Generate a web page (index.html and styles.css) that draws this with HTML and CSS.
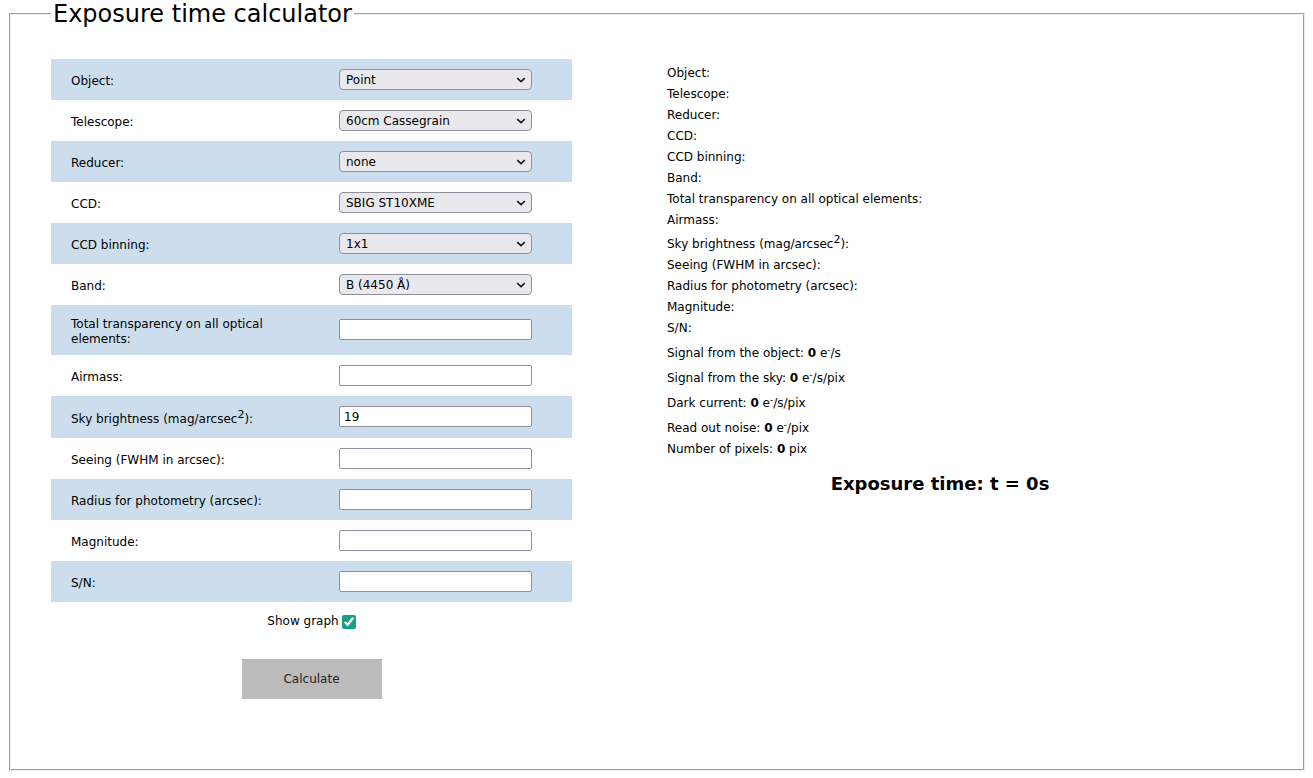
FILE: index.html
```html
<!DOCTYPE html>
<html lang="en">
<head>
<meta charset="utf-8">
<title>Exposure time calculator</title>
<link rel="stylesheet" href="styles.css">
</head>
<body>
<fieldset class="calc">
  <legend class="calc-title">Exposure time calculator</legend>
  <div class="layout">
    <div class="form-col">
      <table class="form-table">
        <tr class="row alt"><td class="lbl"><label>Object:</label></td><td class="ctl"><span class="sel-wrap"><select class="sel"><option>Point</option></select><svg class="chev" width="10" height="6" viewBox="0 0 10 6"><path d="M1.2 1.2 L5 4.6 L8.8 1.2" fill="none" stroke="#1a1a1a" stroke-width="1.6"/></svg></span></td></tr>
        <tr class="row"><td class="lbl"><label>Telescope:</label></td><td class="ctl"><span class="sel-wrap"><select class="sel"><option>60cm Cassegrain</option></select><svg class="chev" width="10" height="6" viewBox="0 0 10 6"><path d="M1.2 1.2 L5 4.6 L8.8 1.2" fill="none" stroke="#1a1a1a" stroke-width="1.6"/></svg></span></td></tr>
        <tr class="row alt"><td class="lbl"><label>Reducer:</label></td><td class="ctl"><span class="sel-wrap"><select class="sel"><option>none</option></select><svg class="chev" width="10" height="6" viewBox="0 0 10 6"><path d="M1.2 1.2 L5 4.6 L8.8 1.2" fill="none" stroke="#1a1a1a" stroke-width="1.6"/></svg></span></td></tr>
        <tr class="row"><td class="lbl"><label>CCD:</label></td><td class="ctl"><span class="sel-wrap"><select class="sel"><option>SBIG ST10XME</option></select><svg class="chev" width="10" height="6" viewBox="0 0 10 6"><path d="M1.2 1.2 L5 4.6 L8.8 1.2" fill="none" stroke="#1a1a1a" stroke-width="1.6"/></svg></span></td></tr>
        <tr class="row alt"><td class="lbl"><label>CCD binning:</label></td><td class="ctl"><span class="sel-wrap"><select class="sel"><option>1x1</option></select><svg class="chev" width="10" height="6" viewBox="0 0 10 6"><path d="M1.2 1.2 L5 4.6 L8.8 1.2" fill="none" stroke="#1a1a1a" stroke-width="1.6"/></svg></span></td></tr>
        <tr class="row"><td class="lbl"><label>Band:</label></td><td class="ctl"><span class="sel-wrap"><select class="sel"><option>B (4450 Å)</option></select><svg class="chev" width="10" height="6" viewBox="0 0 10 6"><path d="M1.2 1.2 L5 4.6 L8.8 1.2" fill="none" stroke="#1a1a1a" stroke-width="1.6"/></svg></span></td></tr>
        <tr class="row alt"><td class="lbl"><label>Total transparency on all optical elements:</label></td><td class="ctl"><input class="txt" type="text"></td></tr>
        <tr class="row"><td class="lbl"><label>Airmass:</label></td><td class="ctl"><input class="txt" type="text"></td></tr>
        <tr class="row alt row-sky"><td class="lbl"><label>Sky brightness (mag/arcsec<sup class="sq">2</sup>):</label></td><td class="ctl"><input class="txt" type="text" value="19"></td></tr>
        <tr class="row"><td class="lbl"><label>Seeing (FWHM in arcsec):</label></td><td class="ctl"><input class="txt" type="text"></td></tr>
        <tr class="row alt"><td class="lbl"><label>Radius for photometry (arcsec):</label></td><td class="ctl"><input class="txt" type="text"></td></tr>
        <tr class="row"><td class="lbl"><label>Magnitude:</label></td><td class="ctl"><input class="txt" type="text"></td></tr>
        <tr class="row alt"><td class="lbl"><label>S/N:</label></td><td class="ctl"><input class="txt" type="text"></td></tr>
      </table>
      <div class="graph-line"><label class="graph-label">Show graph</label><input class="chk" type="checkbox" checked></div>
      <div class="btn-line"><button class="btn" type="button">Calculate</button></div>
    </div>
    <div class="result-col">
      <div class="line">Object:</div>
      <div class="line">Telescope:</div>
      <div class="line">Reducer:</div>
      <div class="line">CCD:</div>
      <div class="line">CCD binning:</div>
      <div class="line">Band:</div>
      <div class="line">Total transparency on all optical elements:</div>
      <div class="line">Airmass:</div>
      <div class="line line-sky">Sky brightness (mag/arcsec<sup class="sq">2</sup>):</div>
      <div class="line">Seeing (FWHM in arcsec):</div>
      <div class="line">Radius for photometry (arcsec):</div>
      <div class="line">Magnitude:</div>
      <div class="line">S/N:</div>
      <div class="line line-sup">Signal from the object: <b>0</b> e<sup class="minus">-</sup>/s</div>
      <div class="line line-sup">Signal from the sky: <b>0</b> e<sup class="minus">-</sup>/s/pix</div>
      <div class="line line-sup">Dark current: <b>0</b> e<sup class="minus">-</sup>/s/pix</div>
      <div class="line line-sup">Read out noise: <b>0</b> e<sup class="minus">-</sup>/pix</div>
      <div class="line">Number of pixels: <b>0</b> pix</div>
      <div class="exposure">Exposure time: t = 0s</div>
    </div>
  </div>
</fieldset>
</body>
</html>
```

FILE: styles.css
```css
html, body {
  margin: 0;
  padding: 0;
  background: #ffffff;
}
body {
  font-family: "DejaVu Sans", sans-serif;
  font-size: 12px;
  color: #000;
}
.calc {
  box-sizing: border-box;
  margin: 0 8px 0 9px;
  padding: 0;
  height: 771px;
  border: 2px groove #f0f0f0;
  min-width: 0;
}
.calc-title {
  margin-left: 40px;
  padding: 0 2px;
  font-size: 24px;
  line-height: 28px;
}
.layout {
  display: flex;
  align-items: flex-start;
  padding-left: 40px;
  padding-top: 31px;
}
.form-col {
  width: 521px;
  flex: none;
}
.form-table {
  width: 521px;
  border-collapse: collapse;
  border-spacing: 0;
}
.row td {
  height: 41px;
  padding: 7px 0 8px;
  box-sizing: border-box;
  vertical-align: middle;
}
.row.row-sky td {
  height: 42px;
}
.row.alt td {
  background: #ccdeed;
}
.lbl {
  width: 288px;
  padding-left: 20px !important;
  padding-right: 50px !important;
  box-sizing: border-box;
}
.lbl label {
  display: block;
  padding-top: 5px;
  line-height: 15px;
}
.ctl {
  padding-right: 40px !important;
}
.sel-wrap {
  position: relative;
  display: block;
  width: 193px;
  height: 21px;
}
.sel {
  -webkit-appearance: none;
  appearance: none;
  display: block;
  box-sizing: border-box;
  width: 193px;
  height: 21px;
  margin: 0;
  padding: 2px 20px 0 6px;
  border: 1px solid #8f8f9d;
  border-radius: 4px;
  background: #e9e9ed;
  color: #000;
  font-family: "DejaVu Sans", sans-serif;
  font-size: 12px;
  line-height: 17px;
}
.chev {
  position: absolute;
  right: 6px;
  top: 8px;
  pointer-events: none;
}
.txt {
  display: block;
  box-sizing: border-box;
  width: 193px;
  height: 21px;
  margin: 0;
  padding: 1px 4px;
  border: 1px solid #8f8f9d;
  border-radius: 2px;
  background: #fff;
  font-family: "DejaVu Sans", sans-serif;
  font-size: 12px;
}
sup.sq {
  font-size: 11px;
  line-height: 0;
  vertical-align: 5px;
}
.graph-line {
  display: flex;
  justify-content: center;
  align-items: center;
  margin-top: 12px;
  height: 15px;
  padding-left: 3px;
}
.graph-label {
  line-height: 15px;
}
.chk {
  width: 14px;
  height: 14px;
  margin: 0 3px 0 3px;
  accent-color: #17a086;
}
.btn-line {
  display: flex;
  justify-content: center;
  margin-top: 30px;
}
.btn {
  width: 140px;
  height: 40px;
  border: none;
  background: #bbbbbb;
  color: #222;
  font-family: "DejaVu Sans", sans-serif;
  font-size: 12px;
  padding: 0;
}
.result-col {
  width: 546px;
  flex: none;
  margin-left: 95px;
  padding-top: 4px;
}
.line {
  line-height: 21px;
  height: 21px;
  white-space: nowrap;
}
.line-sky {
  padding-top: 3px;
}
.line-sup {
  padding-top: 4px;
}
sup.minus {
  font-size: 9px;
  line-height: 0;
  vertical-align: 4px;
}
.exposure {
  margin-top: 13px;
  text-align: center;
  font-weight: bold;
  font-size: 18px;
  line-height: 22px;
}
```
